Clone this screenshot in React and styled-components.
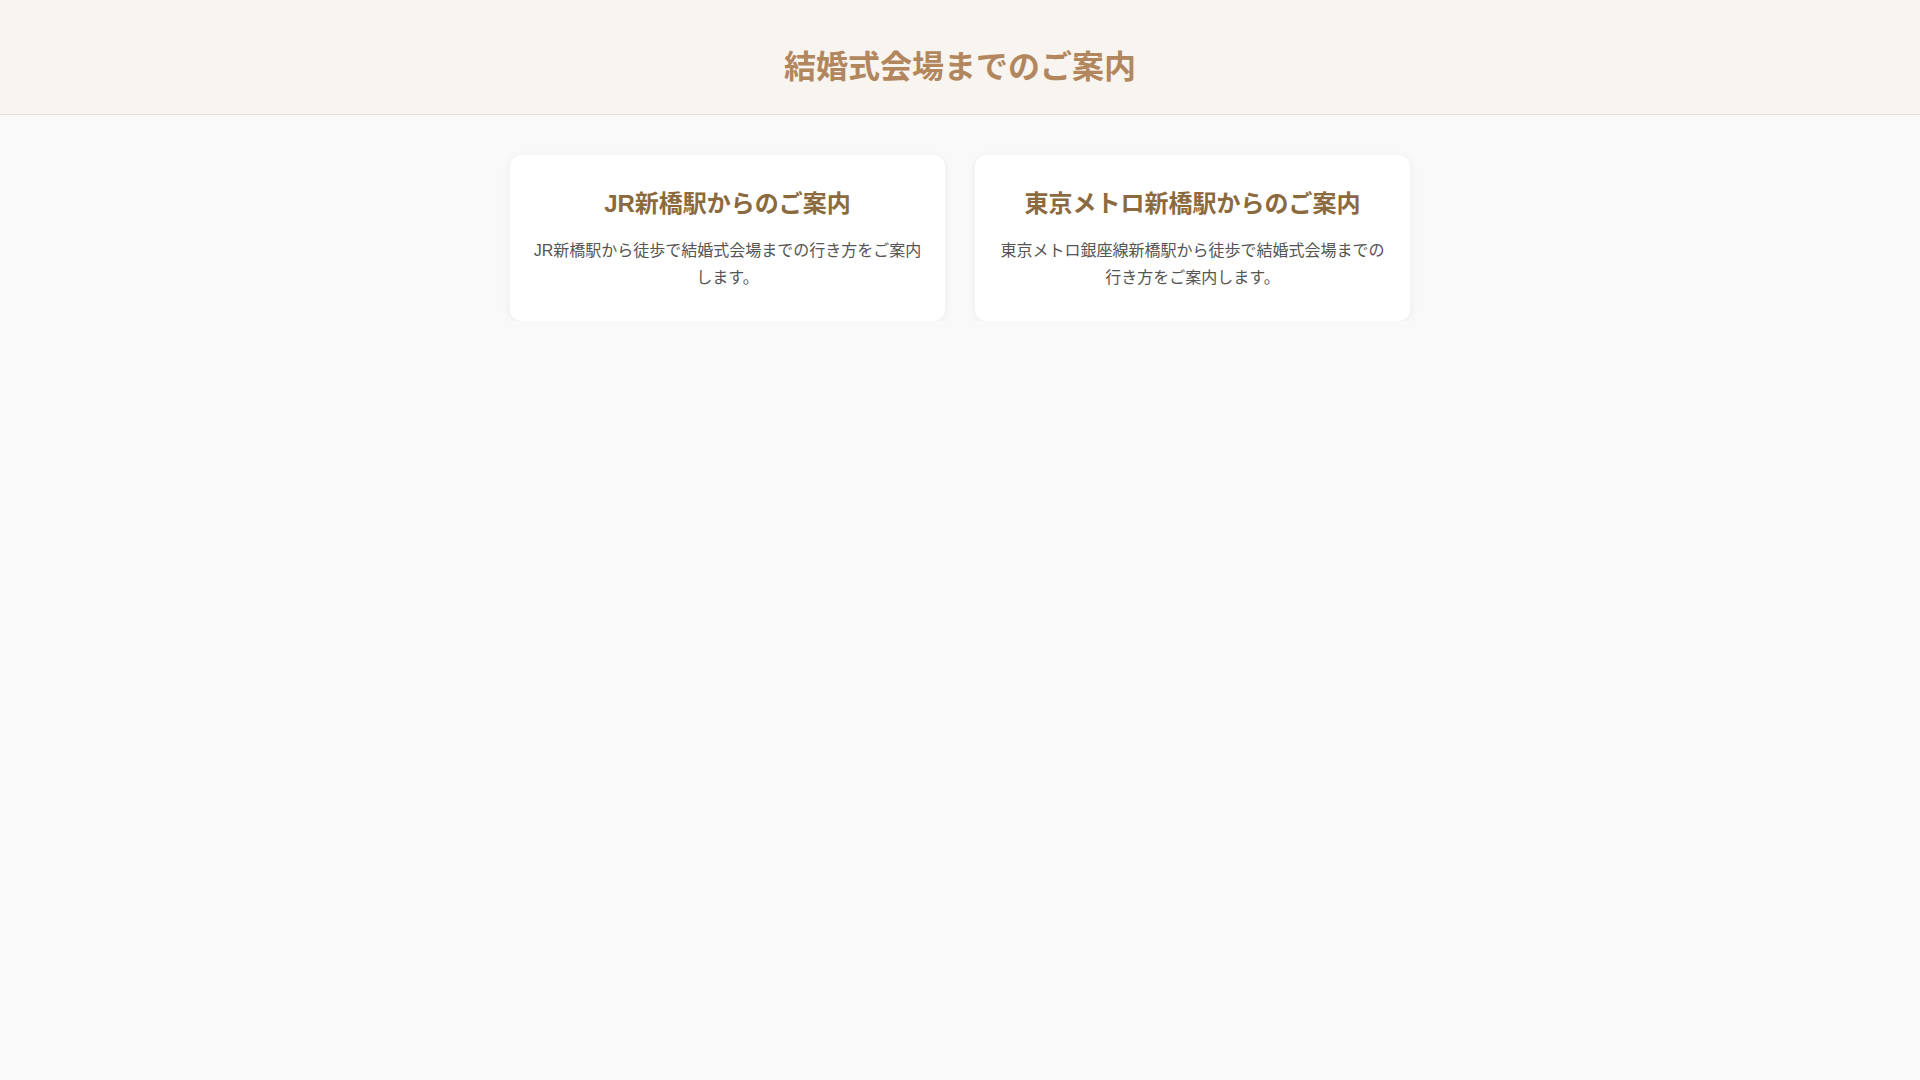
import styled, { createGlobalStyle } from "styled-components";

const GlobalStyle = createGlobalStyle`
  html, body {
    margin: 0;
    padding: 0;
  }
  body {
    background: #f9f9f9;
    font-family: "Liberation Sans", "Noto Sans CJK JP", sans-serif;
    color: #555;
  }
`;

const Header = styled.header`
  background: #f8f4ef;
  border-bottom: 1px solid #e4e0dc;
  height: 115px;
  display: flex;
  align-items: center;
  justify-content: center;
  padding-top: 20px;
  box-sizing: border-box;
`;

const Title = styled.h1`
  margin: 0;
  font-size: 32px;
  line-height: 1.2;
  font-weight: 700;
  color: #b3875e;
`;

const Main = styled.main`
  max-width: 900px;
  margin: 40px auto 0;
  display: grid;
  grid-template-columns: 1fr 1fr;
  gap: 30px;
`;

const Card = styled.section`
  background: #fff;
  border-radius: 12px;
  box-shadow: 0 2px 10px rgba(0, 0, 0, 0.06);
  padding: 32px 20px 30px;
  text-align: center;
`;

const CardTitle = styled.h2`
  margin: 0 0 16px;
  font-size: 24px;
  font-weight: 700;
  color: #8b6a3e;
  line-height: 1.4;
`;

const CardText = styled.p`
  margin: 0;
  font-size: 16px;
  line-height: 1.7;
  color: #555;
`;

const routes = [
  {
    title: "JR新橋駅からのご案内",
    text: "JR新橋駅から徒歩で結婚式会場までの行き方をご案内します。",
  },
  {
    title: "東京メトロ新橋駅からのご案内",
    text: "東京メトロ銀座線新橋駅から徒歩で結婚式会場までの行き方をご案内します。",
  },
];

export default function App() {
  return (
    <>
      <GlobalStyle />
      <Header>
        <Title>結婚式会場までのご案内</Title>
      </Header>
      <Main>
        {routes.map((r) => (
          <Card key={r.title}>
            <CardTitle>{r.title}</CardTitle>
            <CardText>{r.text}</CardText>
          </Card>
        ))}
      </Main>
    </>
  );
}
